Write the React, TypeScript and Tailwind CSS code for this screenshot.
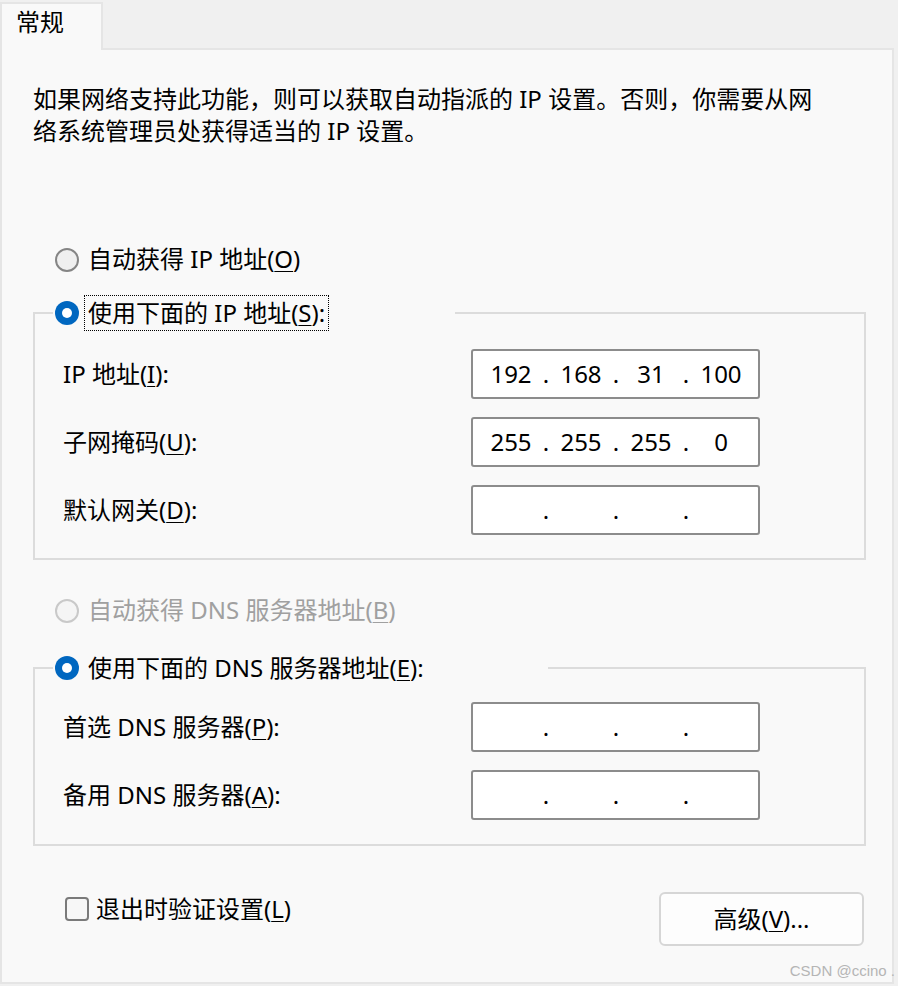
import React from 'react';

const font = "font-['Noto_Sans','Noto_Sans_CJK_SC',sans-serif]";

const Mn = ({ c }: { c: string }) => <span className="underline underline-offset-[3px] decoration-1">{c}</span>;

const Radio = ({ checked, disabled }: { checked?: boolean; disabled?: boolean }) => {
  if (checked) {
    return (
      <span className="flex h-[24px] w-[24px] shrink-0 items-center justify-center rounded-full bg-[#0067c0]">
        <span className="h-[10px] w-[10px] rounded-full bg-white" />
      </span>
    );
  }
  return (
    <span
      className={
        disabled
          ? 'h-[24px] w-[24px] shrink-0 rounded-full border-2 border-[#c9c9c9] bg-[#f5f5f5]'
          : 'h-[24px] w-[24px] shrink-0 rounded-full border-2 border-[#858585] bg-[#efefef]'
      }
    />
  );
};

const IpBox = ({ parts }: { parts: string[] }) => (
  <div className="flex h-[50px] w-[289px] items-center rounded-[3px] border-2 border-[#8c8c8c] bg-white pl-[8px]">
    {parts.map((p, i) => (
      <React.Fragment key={i}>
        {i > 0 && <span className="w-[10px] text-center">.</span>}
        <span className="w-[60px] text-center">{p}</span>
      </React.Fragment>
    ))}
  </div>
);

const Row = ({ label, parts }: { label: React.ReactNode; parts: string[] }) => (
  <div className="flex h-[50px] items-center">
    <div className="w-[408px]">{label}</div>
    <IpBox parts={parts} />
  </div>
);

const empty = ['', '', '', ''];

export default function App() {
  return (
    <div className={`relative h-[986px] w-[898px] bg-[#f0f0f0] pt-[2px] text-[24px] leading-[32px] text-black ${font}`}>
      {/* tab strip */}
      <div className="relative z-10 h-[48px] w-[103px] border-2 border-b-0 border-[#e5e5e5] bg-[#f9f9f9] pl-[14px] pt-[2px]">
        常规
      </div>

      {/* page */}
      <div className="-mt-[2px] h-[936px] w-[894px] border-2 border-[#e5e5e5] bg-[#f9f9f9]">
        <p className="ml-[31px] mt-[33px]">
          如果网络支持此功能，则可以获取自动指派的 IP 设置。否则，你需要从网
          <br />
          络系统管理员处获得适当的 IP 设置。
        </p>

        <div className="ml-[53px] mt-[97px] flex h-[32px] items-center gap-[9px]">
          <Radio />
          <span className="-mt-[3px]">
            自动获得 IP 地址(<Mn c="O" />)
          </span>
        </div>

        <fieldset className="ml-[31px] mt-[21px] w-[833px] border-2 border-[#dcdcdc] pb-[23px] pl-[28px] pt-[20px]">
          <legend className="ml-[-10px] w-[402px] pl-[2px]">
            <div className="flex h-[32px] items-center gap-[5px]">
              <Radio checked />
              <span className="border border-dotted border-black px-[3px] leading-[34px]">
                使用下面的 IP 地址(<Mn c="S" />):
              </span>
            </div>
          </legend>
          <div className="flex flex-col gap-[18px]">
            <Row
              label={
                <>
                  IP 地址(<Mn c="I" />):
                </>
              }
              parts={['192', '168', '31', '100']}
            />
            <Row
              label={
                <>
                  子网掩码(<Mn c="U" />):
                </>
              }
              parts={['255', '255', '255', '0']}
            />
            <Row
              label={
                <>
                  默认网关(<Mn c="D" />):
                </>
              }
              parts={empty}
            />
          </div>
        </fieldset>

        <div className="ml-[53px] mt-[35px] flex h-[32px] items-center gap-[9px] text-[#a0a0a0]">
          <Radio disabled />
          <span className="-mt-[2px]">
            自动获得 DNS 服务器地址(<Mn c="B" />)
          </span>
        </div>

        <fieldset className="ml-[31px] mt-[25px] w-[833px] border-2 border-[#dcdcdc] pb-[24px] pl-[28px] pt-[18px]">
          <legend className="ml-[-10px] w-[495px] pl-[2px]">
            <div className="flex h-[32px] items-center gap-[9px]">
              <Radio checked />
              <span>
                使用下面的 DNS 服务器地址(<Mn c="E" />):
              </span>
            </div>
          </legend>
          <div className="flex flex-col gap-[18px]">
            <Row
              label={
                <>
                  首选 DNS 服务器(<Mn c="P" />):
                </>
              }
              parts={empty}
            />
            <Row
              label={
                <>
                  备用 DNS 服务器(<Mn c="A" />):
                </>
              }
              parts={empty}
            />
          </div>
        </fieldset>

        <div className="mr-[28px] mt-[46px] flex items-start justify-between pl-[63px]">
          <label className="mt-[1px] flex h-[32px] items-center gap-[7px]">
            <span className="h-[24px] w-[24px] rounded-[4px] border-2 border-[#7a7a7a] bg-[#f7f7f7]" />
            <span>
              退出时验证设置(<Mn c="L" />)
            </span>
          </label>
          <button className="h-[54px] w-[205px] rounded-[6px] border-2 border-[#d6d6d6] bg-[#fdfdfd]">
            高级(<Mn c="V" />)...
          </button>
        </div>
      </div>

      <div className="absolute bottom-[6px] right-[3px] font-['Liberation_Sans',sans-serif] text-[15px] leading-[18px] text-[#b5b5b5]">
        CSDN @ccino .
      </div>
    </div>
  );
}
